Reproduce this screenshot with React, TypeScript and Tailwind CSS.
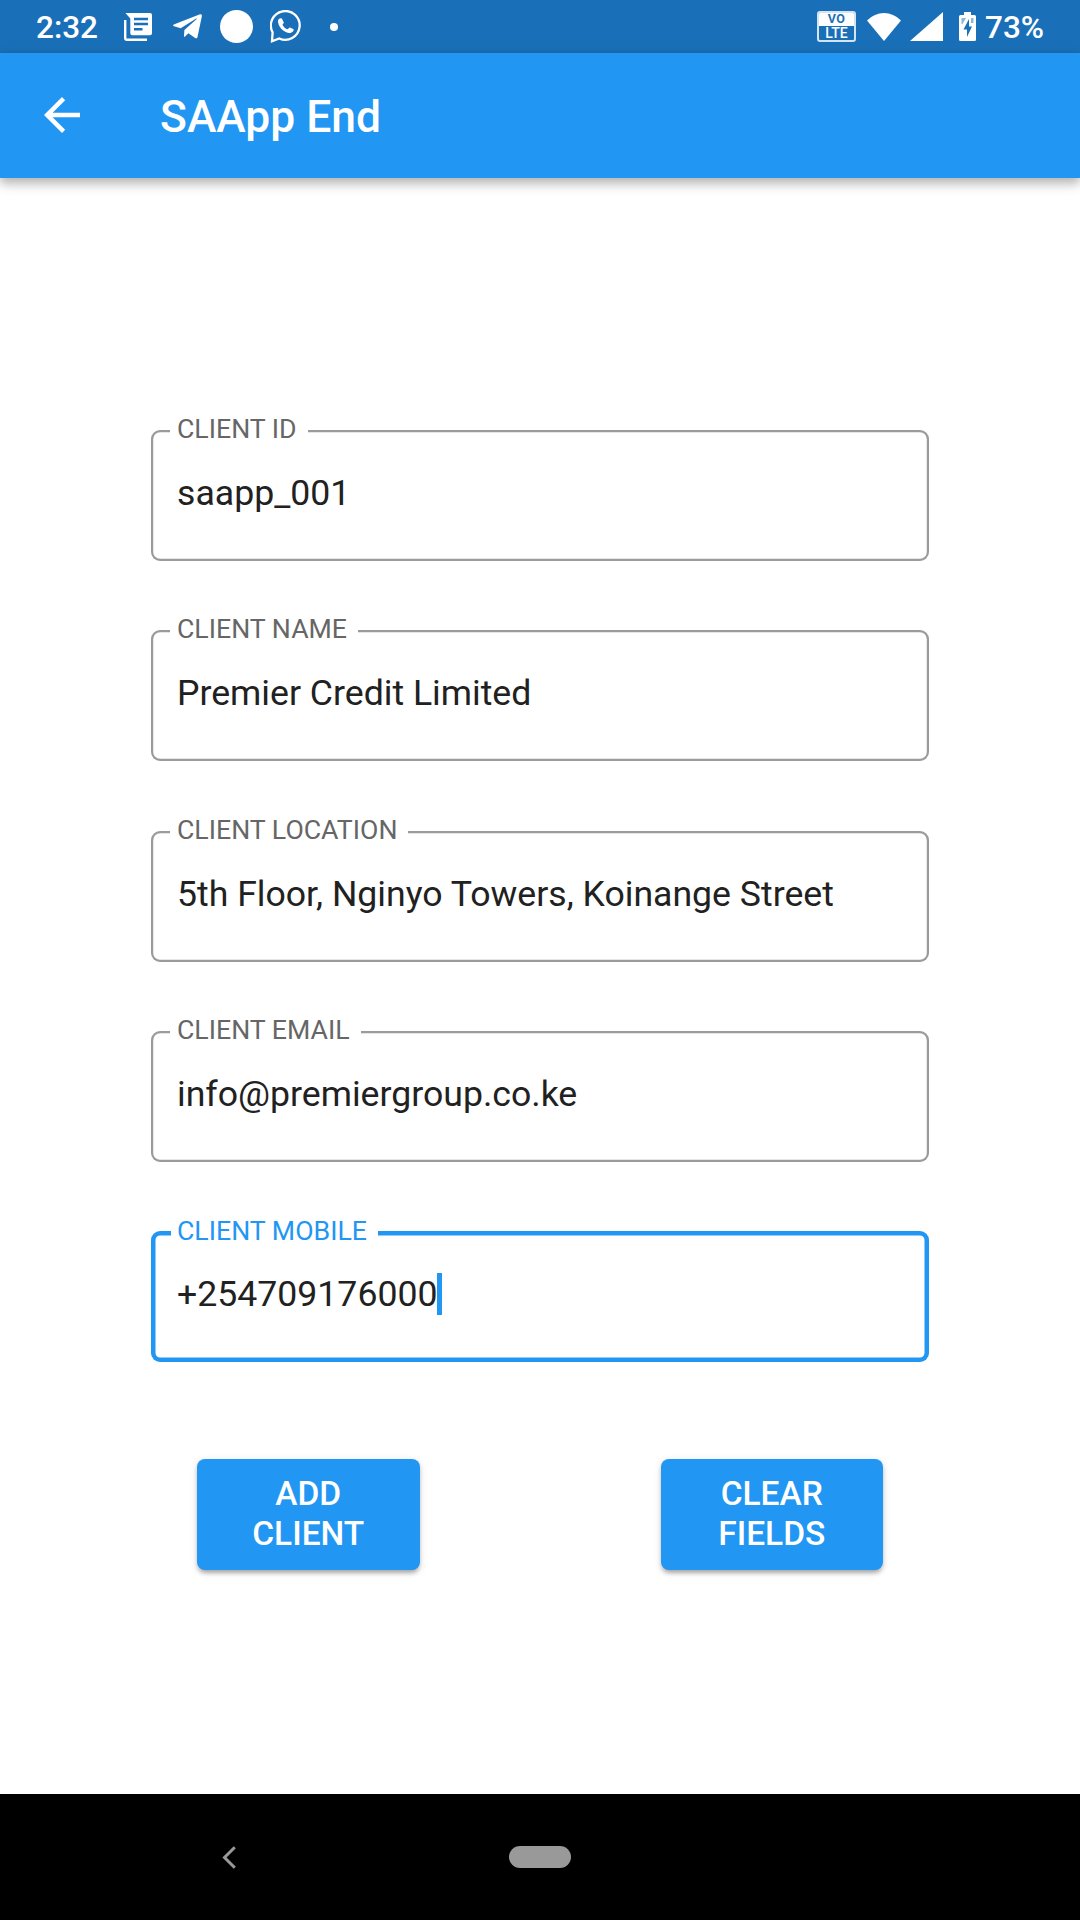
import { FaTelegramPlane } from "react-icons/fa";

type FieldProps = { label: string; value: string; focused?: boolean };

const fields: FieldProps[] = [
  { label: "CLIENT ID", value: "saapp_001" },
  { label: "CLIENT NAME", value: "Premier Credit Limited" },
  { label: "CLIENT LOCATION", value: "5th Floor, Nginyo Towers, Koinange Street" },
  { label: "CLIENT EMAIL", value: "info@premiergroup.co.ke" },
  { label: "CLIENT MOBILE", value: "+254709176000", focused: true },
];

function NewsIcon() {
  return (
    <svg className="ml-[27px] h-7 w-7" viewBox="0 0 28 28" fill="none">
      <path d="M1.2 7v18.2a1.6 1.6 0 0 0 1.6 1.6H23" stroke="white" strokeWidth="2.4" />
      <path d="M1.4 0H26a2 2 0 0 1 2 2v18.300a2 2 0 0 1-2 2H8.300a2 2 0 0 1-2-2V5.600z" fill="white" />
      <path d="M10 6h14M10 11h14M10 16.200h8.500" stroke="#1a70b8" strokeWidth="2.400" />
    </svg>
  );
}

function ChatCallIcon() {
  return (
    <svg className="ml-[17px] h-[34px] w-[32px]" viewBox="0 0 32 34" fill="none">
      <path
        d="M2.600 22.300A14.400 14.400 0 1 1 9.200 28.500L2 31.300z"
        stroke="white"
        strokeWidth="2.300"
      />
      <path
        d="M8 10.500C8.800 8.500 11 7.800 12 8.800L13.800 12.400C13.900 13.300 12.500 14 12.500 14.700C13.500 17 15.500 18.700 17.600 19.200C18.600 18.800 19 17.300 20 17.400L23.600 19.300C24 21.500 21.500 23.200 19 23C13.500 22.500 7.500 16 8 10.500z"
        fill="white"
      />
    </svg>
  );
}

function StatusBar() {
  return (
    <div className="flex h-[53px] items-center bg-[#1a70b8] pl-[36px] text-white">
      <span className="w-[61px] pt-px text-[31.5px] leading-[53px] font-medium whitespace-nowrap">2:32</span>
      <NewsIcon />
      <FaTelegramPlane className="ml-[20px] h-[33px] w-[31px]" />
      <span className="ml-[17px] h-[33px] w-[33px] rounded-full bg-white" />
      <ChatCallIcon />
      <span className="ml-[28px] h-2 w-2 rounded-full bg-white" />
      <div className="ml-auto flex items-center pr-[37px]">
        <div className="flex h-[31px] w-[39px] flex-col overflow-hidden rounded-[3px] border-2 border-[#d3e4f2] text-center font-bold">
          <span className="h-[13px] bg-white text-[12.500px] leading-[12px] tracking-[0.5px] text-[#1a70b8]">VO</span>
          <span className="h-[14px] text-[14px] leading-[15px] font-medium text-white">LTE</span>
        </div>
        <svg className="ml-[11px] h-[28px] w-[34px]" viewBox="0 0 34 28" fill="white">
          <path d="M17 28L0 7.500Q7.500 0 17 0T34 7.500z" />
        </svg>
        <svg className="ml-[9px] h-[29px] w-[33px]" viewBox="0 0 33 29" fill="white">
          <path d="M33 0v29H0z" />
        </svg>
        <svg className="ml-[16px] h-[29px] w-[17px]" viewBox="0 0 17 29">
          <path d="M5 0h7v3h3.500A1.500 1.500 0 0 1 17 4.500v23a1.500 1.500 0 0 1-1.500 1.500h-14A1.500 1.500 0 0 1 0 27.500v-23A1.500 1.500 0 0 1 1.500 3H5z" fill="white" />
          <path d="M2.500 6h4.500l-3.500 6h-1zM12 6h2.500v5H12z" fill="#8db8dc" />
          <path d="M10 7L4.500 17.500H8V25l5-10.500h-3z" fill="#1a70b8" />
        </svg>
        <span className="ml-[9px] w-[58px] pt-px text-[31.5px] leading-[53px] font-medium whitespace-nowrap">73%</span>
      </div>
    </div>
  );
}

function AppBar() {
  return (
    <header className="flex h-[124.500px] items-center bg-[#2196f3] pl-[44px] text-white shadow-[0_4px_9px_rgba(0,0,0,0.2),0_9px_11px_rgba(0,0,0,0.08),0_2px_16px_rgba(0,0,0,0.08)]">
      <svg className="h-9 w-9" viewBox="4 4 16 16" fill="white">
        <path d="M20 11H7.830l5.590-5.590L12 4l-8 8 8 8 1.410-1.410L7.830 13H20v-2z" />
      </svg>
      <h1 className="ml-[80px] pt-[4px] text-[44.400px] leading-[52px] font-medium">SAApp End</h1>
    </header>
  );
}

function Field({ label, value, focused }: FieldProps) {
  return (
    <div
      className={
        focused
          ? "relative flex h-[131px] items-start rounded-[9px] pt-[42px] pl-[26px] shadow-[inset_0_0_0_4.500px_#2196f3]"
          : "relative flex h-[131px] items-start rounded-[9px] pt-[42px] pl-[26px] shadow-[inset_0_0_0_2.230px_#9b9b9b]"
      }
    >
      <span
        className={
          focused
            ? "absolute -top-[16px] left-[20px] bg-white pr-[11px] pl-[6px] text-[26.700px] leading-[32px] whitespace-nowrap text-[#2196f3]"
            : "absolute -top-[17px] left-[19px] bg-white pr-[11px] pl-[7px] text-[26.700px] leading-[32px] whitespace-nowrap text-[#666666]"
        }
      >
        {label}
      </span>
      <span className="text-[35.640px] leading-[42px] whitespace-nowrap text-[#212121]">{value}</span>
      {focused && <span className="h-[42px] w-[4.500px] bg-[#2196f3]" />}
    </div>
  );
}

function ActionButton({ lines }: { lines: string[] }) {
  return (
    <button className="flex h-[111px] w-[222.500px] flex-col items-center justify-center rounded-[8px] bg-[#2196f3] text-[33.5px] leading-[40px] font-medium text-white shadow-[0_5px_5px_-3px_rgba(0,0,0,0.2),0_3px_4px_rgba(0,0,0,0.14),0_2px_8px_rgba(0,0,0,0.12)]">
      {lines.map((l) => (
        <span key={l}>{l}</span>
      ))}
    </button>
  );
}

export default function App() {
  return (
    <div className="flex h-[1920px] w-[1080px] flex-col overflow-hidden bg-white font-[Roboto,sans-serif]">
      <StatusBar />
      <AppBar />
      <main className="flex-1 pt-[252.500px]">
        <div className="ml-[151px] flex w-[778px] flex-col gap-[69.300px]">
          {fields.map((f) => (
            <Field key={f.label} {...f} />
          ))}
        </div>
        <div className="mt-[96.500px] flex justify-between pr-[197px] pl-[197px]">
          <ActionButton lines={["ADD", "CLIENT"]} />
          <ActionButton lines={["CLEAR", "FIELDS"]} />
        </div>
      </main>
      <nav className="flex h-[126px] items-center bg-black pl-[222px]">
        <svg className="h-[23px] w-[14px]" viewBox="0 0 14 23" fill="none">
          <path d="M12.800 1.200L2.500 11.500l10.300 10.300" stroke="#999999" strokeWidth="3" />
        </svg>
        <span className="ml-[273px] h-[22px] w-[62px] rounded-full bg-[#999999]" />
      </nav>
    </div>
  );
}
